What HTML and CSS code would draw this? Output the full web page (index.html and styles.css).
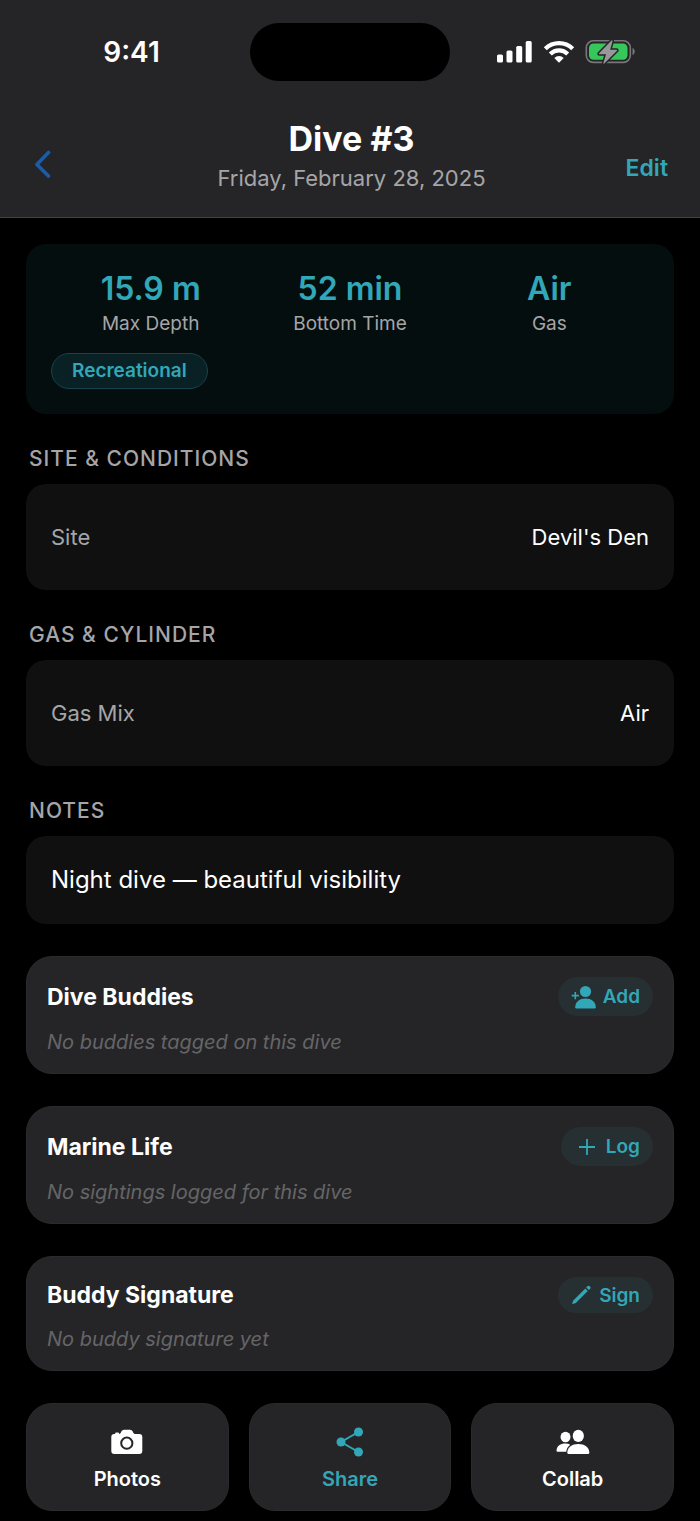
FILE: index.html
```html
<!DOCTYPE html>
<html lang="en">
<head>
<meta charset="utf-8">
<meta name="viewport" content="width=device-width, initial-scale=1">
<title>Dive #3</title>
<link rel="stylesheet" href="styles.css">
</head>
<body>
<header class="header">
  <div class="status">
    <div class="status-time">9:41</div>
    <div class="island"></div>
    <div class="status-icons">
      <svg width="36" height="24" viewBox="0 0 36 24" fill="#fff" aria-hidden="true"><rect x="0" y="14.5" width="6" height="8" rx="1.6"/><rect x="9.5" y="10.5" width="6" height="12" rx="1.6"/><rect x="19.2" y="6" width="6" height="16.500" rx="1.6"/><rect x="28.700" y="1" width="6" height="21.500" rx="1.6"/></svg>
      <svg width="32" height="24" viewBox="0 0 32 24" aria-hidden="true"><g fill="none" stroke="#fff" stroke-width="4.200"><path d="M2.300 8.700a19.400 19.400 0 0 1 27.400 0"/><path d="M7.300 13.900a12.300 12.300 0 0 1 17.400 0"/></g><path d="M11.300 18a6.800 6.800 0 0 1 9.400 0L16 22.700z" fill="#fff"/></svg>
      <svg width="50" height="26" viewBox="0 0 50 26" aria-hidden="true"><rect x="1.300" y="1.800" width="44" height="21.600" rx="7" fill="none" stroke="#77777a" stroke-width="1.600"/><rect x="4" y="4.400" width="38.500" height="16.400" rx="4.500" fill="#35c759"/><path d="M47.500 9.100c3 1.200 3 5.800 0 7z" fill="#77777a"/><path d="M26.500 1.500L14 14.300q-.7 1 .6 1h6.400l-2.600 8.800q-.1 1.200.9.400L32 11.700q.6-1-.6-1H25.200L27.500 2.200q0-1.300-1-.7z" fill="#98989b" stroke="#252527" stroke-width="3" paint-order="stroke" stroke-linejoin="round"/></svg>
    </div>
  </div>
  <nav class="nav">
    <button class="back" type="button" aria-label="Back"><svg width="18" height="30" viewBox="0 0 18 30" aria-hidden="true"><path d="M13.500 3.500L1.900 15.500l11.600 11.500" fill="none" stroke="#1d5ba5" stroke-width="3.600" stroke-linecap="round" stroke-linejoin="round"/></svg></button>
    <div class="heading">
      <h1 class="title">Dive #3</h1>
      <p class="date">Friday, February 28, 2025</p>
    </div>
    <button class="edit" type="button">Edit</button>
  </nav>
</header>
<main class="content">
  <section class="summary">
    <div class="stats">
      <div class="stat"><div class="stat-value">15.9 m</div><div class="stat-label">Max Depth</div></div>
      <div class="stat"><div class="stat-value">52 min</div><div class="stat-label">Bottom Time</div></div>
      <div class="stat"><div class="stat-value">Air</div><div class="stat-label">Gas</div></div>
    </div>
    <span class="tag">Recreational</span>
  </section>

  <section>
    <h2 class="section-title">SITE &amp; CONDITIONS</h2>
    <div class="row"><span class="row-label">Site</span><span>Devil's Den</span></div>
  </section>
  <section>
    <h2 class="section-title">GAS &amp; CYLINDER</h2>
    <div class="row"><span class="row-label">Gas Mix</span><span>Air</span></div>
  </section>
  <section>
    <h2 class="section-title">NOTES</h2>
    <p class="note">Night dive — beautiful visibility</p>
  </section>

  <section class="card">
    <div class="card-head">
      <h2 class="card-title">Dive Buddies</h2>
      <button class="pill" type="button"><svg width="26" height="24" viewBox="0 0 26 24" fill="currentColor" aria-hidden="true"><circle cx="14.500" cy="6.500" r="5.600"/><path d="M4.200 22.200C4.600 16.500 8.600 13.600 14.500 13.600s9.900 2.900 10.300 8.600q0 1.300-1.200 1.300H5.400q-1.200 0-1.200-1.300z"/><path d="M4.300 7v7.200M.7 10.600h7.200" fill="none" stroke="currentColor" stroke-width="1.600"/></svg>Add</button>
    </div>
    <p class="empty">No buddies tagged on this dive</p>
  </section>
  <section class="card">
    <div class="card-head">
      <h2 class="card-title">Marine Life</h2>
      <button class="pill" type="button"><svg width="26" height="24" viewBox="0 0 26 24" aria-hidden="true"><path d="M13 4v16M5 12h16" fill="none" stroke="currentColor" stroke-width="1.800"/></svg>Log</button>
    </div>
    <p class="empty">No sightings logged for this dive</p>
  </section>
  <section class="card">
    <div class="card-head">
      <h2 class="card-title">Buddy Signature</h2>
      <button class="pill pill-small" type="button"><svg width="22" height="22" viewBox="0 0 22 22" fill="currentColor" aria-hidden="true"><path d="M14.300 4.400l2.500 2.500L4.800 19l-2.900 1q-.8.100-.6-.7l1-2.900z"/><path d="M15.200 3.500l1.200-1.200q1.300-1.200 2.600.1t.1 2.500L17.800 6z"/></svg>Sign</button>
    </div>
    <p class="empty">No buddy signature yet</p>
  </section>

  <div class="actions">
    <button class="action" type="button"><svg width="34" height="32" viewBox="0 0 34 32" fill="#fff" aria-hidden="true"><path d="M4 7.900h1q.2-1.300 1.300-1.300h1.500q1.200 0 1.500 1.300 1-.1 1.500-1.200l.7-1.500Q12.100 3.700 14 3.700h6q1.900 0 2.600 1.500l.7 1.500q.6 1.200 2 1.200h4q3 0 3 3v14.200q0 3-3 3H4.300q-3 0-3-3V10.900q0-2.700 2.700-3z"/><circle cx="16.800" cy="17.200" r="5.600" fill="none" stroke="#252527" stroke-width="2"/></svg>Photos</button>
    <button class="action action-accent" type="button"><svg width="34" height="32" viewBox="0 0 34 32" fill="currentColor" aria-hidden="true"><path d="M25.500 6L8 16l17.500 10" fill="none" stroke="currentColor" stroke-width="2"/><circle cx="25.500" cy="6" r="4.500"/><circle cx="8" cy="16" r="4.500"/><circle cx="25.500" cy="26" r="4.500"/></svg>Share</button>
    <button class="action" type="button"><svg width="34" height="32" viewBox="0 0 34 32" fill="#fff" aria-hidden="true"><ellipse cx="9.500" cy="11" rx="5" ry="5.300"/><path d="M.5 24.700C.7 20 4.500 17.600 9.300 17.600q3 0 5 1.100-3.700 2.600-4 7H1.600q-1.100 0-1.100-1z"/><ellipse cx="22.300" cy="9.900" rx="5.600" ry="6.100"/><path d="M11.300 26.500C11.600 21 16 18 22.300 18s10.700 3 11 8.500q0 1.500-1.300 1.500H12.600q-1.300 0-1.300-1.500z"/></svg>Collab</button>
  </div>
</main>
</body>
</html>
```

FILE: styles.css
```css
:root {
  --accent: #32a7b8;
  --surface: #252527;
  --muted: #a5a5a8;
}
* { box-sizing: border-box; }
body {
  margin: 0;
  background: #000;
  color: #fff;
  font-family: Inter, "Liberation Sans", sans-serif;
}
h1, h2, p { margin: 0; }
button {
  border: 0;
  padding: 0;
  background: none;
  color: inherit;
  font: inherit;
  cursor: pointer;
}
svg { display: block; flex: none; }

.header {
  background: var(--surface);
  border-bottom: 1px solid #454547;
  padding-top: 23px;
}
.status {
  display: grid;
  grid-template-columns: 1fr 200px 1fr;
  align-items: center;
}
.status-time {
  padding-left: 13px;
  text-align: center;
  font-size: 28px;
  line-height: 32px;
  font-weight: 600;
}
.island {
  height: 58px;
  border-radius: 29px;
  background: #000;
}
.status-icons {
  display: flex;
  justify-content: center;
  align-items: center;
  gap: 10px;
  padding-right: 18px;
}
.nav {
  display: grid;
  grid-template-columns: 1fr auto 1fr;
  align-items: center;
  margin-top: 30px;
  padding: 0 32px 0 35px;
}
.back { justify-self: start; }
.heading { padding: 8px 0 23px; text-align: center; }
.title { font-size: 34px; line-height: 40px; font-weight: 700; }
.date { margin-top: 3px; font-size: 22px; line-height: 32px; color: var(--muted); }
.edit {
  justify-self: end;
  padding-top: 8px;
  font-size: 23px;
  line-height: 30px;
  font-weight: 600;
  color: var(--accent);
}

.content { padding: 26px 26px 10px; }
.summary {
  display: flex;
  flex-direction: column;
  align-items: flex-start;
  gap: 17px;
  padding: 25px;
  border-radius: 20px;
  background: #040e0f;
}
.stats {
  display: grid;
  grid-template-columns: repeat(3, 1fr);
  width: 100%;
  text-align: center;
}
.stat-value { font-size: 32px; line-height: 40px; font-weight: 600; color: var(--accent); }
.stat-label { margin-top: 3px; font-size: 19px; line-height: 24px; color: var(--muted); }
.tag {
  padding: 5px 20px;
  border: 1px solid #17434a;
  border-radius: 18px;
  background: #092125;
  color: var(--accent);
  font-size: 19px;
  line-height: 24px;
  font-weight: 600;
}

.section-title {
  margin: 32px 3px 12px;
  color: var(--muted);
  font-size: 21px;
  line-height: 26px;
  font-weight: 500;
  letter-spacing: 1px;
}
.row {
  display: flex;
  justify-content: space-between;
  padding: 37px 25px;
  border-radius: 20px;
  background: #101010;
  font-size: 22px;
  line-height: 32px;
}
.row-label { color: var(--muted); }
.note {
  padding: 28px 25px;
  border-radius: 20px;
  background: #101010;
  font-size: 24px;
  line-height: 32px;
}

.card {
  margin-top: 32px;
  padding: 20px 20px 17px;
  border: 1px solid #2b2b2d;
  border-radius: 26px;
  background: var(--surface);
}
.card-head { display: flex; justify-content: space-between; align-items: center; }
.card-title { font-size: 23px; line-height: 32px; font-weight: 700; }
.pill {
  display: flex;
  align-items: center;
  gap: 6px;
  height: 39px;
  padding: 0 13px;
  border-radius: 20px;
  background: #262f31;
  color: var(--accent);
  font-size: 19px;
  font-weight: 600;
}
.pill-small { height: 36px; }
.empty {
  margin-top: 12px;
  color: #656567;
  font-size: 20px;
  line-height: 28px;
  font-style: italic;
}

.actions {
  display: grid;
  grid-template-columns: repeat(3, 1fr);
  gap: 20px;
  margin-top: 32px;
}
.action {
  display: flex;
  flex-direction: column;
  align-items: center;
  gap: 8px;
  padding: 22px 12px 18px;
  border: 1px solid #2b2b2d;
  border-radius: 26px;
  background: var(--surface);
  font-size: 20px;
  line-height: 26px;
  font-weight: 600;
}
.action-accent { color: var(--accent); }
```
